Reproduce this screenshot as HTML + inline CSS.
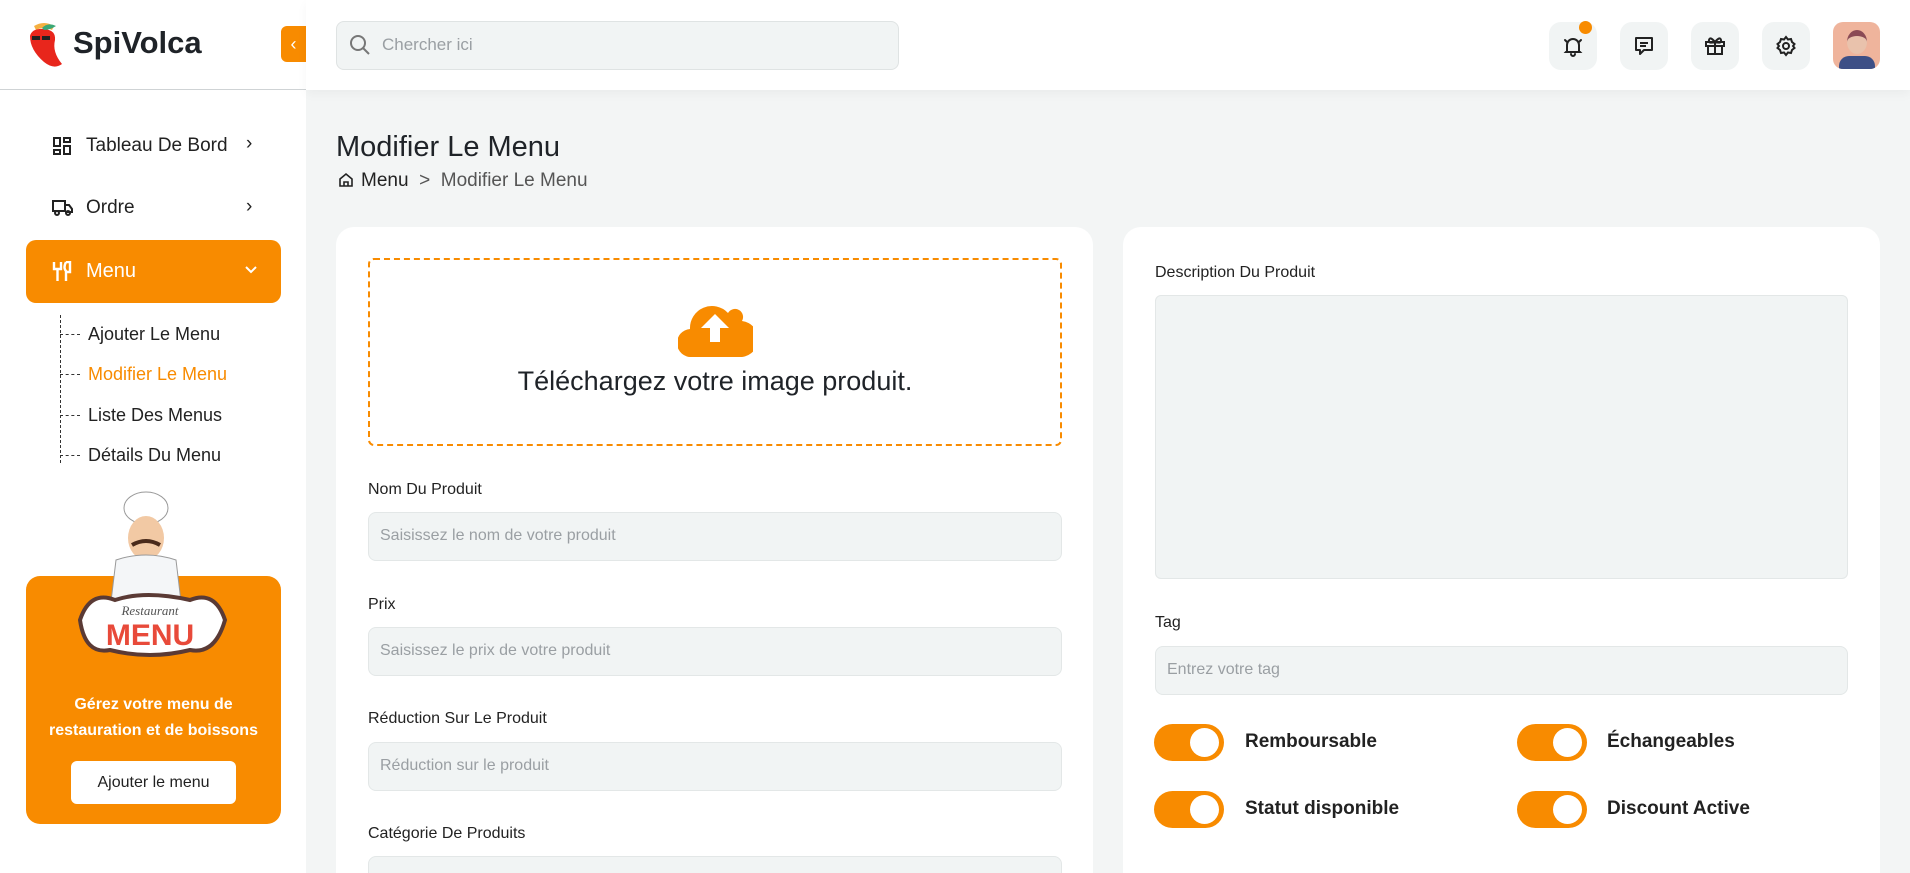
<!DOCTYPE html>
<html style="overflow:hidden"><head><meta charset="utf-8"><style>
*{box-sizing:border-box;margin:0;padding:0}
html,body{width:1910px;height:873px;overflow:hidden}
body{background:#f3f5f5;font-family:"Liberation Sans",sans-serif;color:#1f2328;position:relative}
.abs{position:absolute}
.side{left:0;top:0;width:306px;height:873px;background:#fff}
.hdr{left:306px;top:0;width:1604px;height:90px;background:#fff;box-shadow:0 4px 10px rgba(0,0,0,.04)}
.ib{width:48px;height:48px;border-radius:12px;background:#f1f4f4;display:flex;align-items:center;justify-content:center}
.card{background:#fff;border-radius:18px}
.lbl{font-size:16px;color:#222}
.inp{background:#f1f4f4;border:1px solid #e3e7e7;border-radius:8px;height:49px;font-size:16px;color:#9a9fa3;padding:14px 11px}
.tg{width:70px;height:37px;border-radius:19px;background:#f88b00}
.tg:after{content:"";position:absolute;right:5px;top:4px;width:29px;height:29px;border-radius:50%;background:#fff}
.tl{font-size:19px;font-weight:bold;color:#222}
.nav{font-size:19px;color:#222}
.sub{font-size:18px;color:#222}
</style></head><body>
<div class="abs side"></div>
<div class="abs" style="left:0;top:89px;width:306px;height:1px;background:#cfd3d5"></div>
<svg class="abs" style="left:24px;top:20px" width="40" height="50" viewBox="0 0 40 50"><path d="M10 6 Q20 0 30 6 L28 10 Q20 6 12 10Z" fill="#f5b041"/><path d="M6 16 Q8 8 20 9 Q32 10 31 20 Q28 32 38 44 Q30 50 20 42 Q6 30 6 16Z" fill="#e8261c"/><rect x="8" y="16" width="8" height="4" fill="#222"/><rect x="18" y="16" width="8" height="4" fill="#222"/><path d="M18 8 Q24 2 32 6 Q26 10 20 10Z" fill="#3aa876"/></svg>
<div class="abs" style="left:73px;top:25px;font-size:31px;font-weight:bold;color:#1f2328">SpiVolca</div>
<div class="abs" style="left:281px;top:26px;width:25px;height:36px;background:#f88b00;border-radius:6px 0 0 6px;color:#fff;font-size:18px;text-align:center;line-height:36px">‹</div>
<svg class="abs" style="left:53px;top:137px" width="19" height="19" viewBox="0 0 19 19" fill="none" stroke="#222" stroke-width="2"><rect x="1" y="1" width="6" height="8"/><rect x="11" y="1" width="6" height="4"/><rect x="1" y="13" width="6" height="4"/><rect x="11" y="9" width="6" height="8"/></svg>
<div class="abs nav" style="left:86px;top:135px">Tableau De Bord</div>
<div class="abs nav" style="left:246px;top:133px">›</div>
<svg class="abs" style="left:51px;top:199px" width="22" height="18" viewBox="0 0 22 18" fill="none" stroke="#222" stroke-width="2"><path d="M2 2h12v10H2z M14 6h4l3 4v3h-7"/><circle cx="6" cy="14" r="2"/><circle cx="17" cy="14" r="2"/></svg>
<div class="abs nav" style="left:86px;top:197px">Ordre</div>
<div class="abs nav" style="left:246px;top:196px">›</div>
<div class="abs" style="left:26px;top:240px;width:255px;height:63px;background:#f88b00;border-radius:10px"></div>
<svg class="abs" style="left:52px;top:261px" width="20" height="21" viewBox="0 0 20 21" fill="none" stroke="#fff" stroke-width="2.4"><path d="M2 1v7h7V1M5.5 8v12M14 1q-3 6 0 9v10M14 1h4v10h-4"/></svg>
<div class="abs nav" style="left:86px;top:260px;color:#fff;font-size:20px">Menu</div>
<svg class="abs" style="left:244px;top:265px" width="14" height="10" viewBox="0 0 14 10" fill="none" stroke="#fff" stroke-width="2"><path d="M2 2l5 5 5-5"/></svg>
<div class="abs" style="left:60px;top:315px;height:148px;border-left:1px dashed #333"></div>
<div class="abs" style="left:60px;top:334px;width:20px;border-top:1px dashed #333"></div>
<div class="abs" style="left:60px;top:374px;width:20px;border-top:1px dashed #333"></div>
<div class="abs" style="left:60px;top:415px;width:20px;border-top:1px dashed #333"></div>
<div class="abs" style="left:60px;top:455px;width:20px;border-top:1px dashed #333"></div>
<div class="abs sub" style="left:88px;top:324px">Ajouter Le Menu</div>
<div class="abs sub" style="left:88px;top:364px;color:#f88b00">Modifier Le Menu</div>
<div class="abs sub" style="left:88px;top:405px">Liste Des Menus</div>
<div class="abs sub" style="left:88px;top:445px">Détails Du Menu</div>
<div class="abs" style="left:26px;top:576px;width:255px;height:248px;background:#f88b00;border-radius:14px"></div>
<svg class="abs" style="left:70px;top:480px" width="170" height="200" viewBox="0 0 170 200"><ellipse cx="76" cy="28" rx="22" ry="16" fill="#fff" stroke="#999"/><ellipse cx="76" cy="58" rx="18" ry="22" fill="#f2c9a4"/><path d="M62 65q14-8 28 0" stroke="#4a2a1a" stroke-width="4" fill="none"/><path d="M46 80q30-10 60 0l6 50H40z" fill="#f4f6f8" stroke="#999"/><path d="M10 140q10-30 35-20 30-10 75 0 25-10 35 20-10 35-35 30-40 10-80 0-25 5-30-30z" fill="#fff" stroke="#5a3a35" stroke-width="4"/><text x="80" y="135" font-family="Liberation Serif,serif" font-style="italic" font-size="13" fill="#555" text-anchor="middle">Restaurant</text><text x="80" y="165" font-family="Liberation Sans,sans-serif" font-weight="bold" font-size="30" fill="#e84a3a" text-anchor="middle">MENU</text></svg>
<div class="abs" style="left:26px;top:692px;width:255px;text-align:center;color:#fff;font-size:16px;font-weight:bold;line-height:26px">Gérez votre menu de<br>restauration et de boissons</div>
<div class="abs" style="left:71px;top:761px;width:165px;height:43px;background:#fff;border-radius:6px;text-align:center;line-height:43px;font-size:16px;color:#222">Ajouter le menu</div>
<div class="abs hdr"></div>
<div class="abs" style="left:336px;top:21px;width:563px;height:49px;background:#f1f4f4;border:1px solid #dfe3e3;border-radius:8px"></div>
<svg class="abs" style="left:349px;top:34px" width="22" height="22" viewBox="0 0 22 22" fill="none" stroke="#777" stroke-width="2"><circle cx="9" cy="9" r="7"/><path d="M14 14l6 6"/></svg>
<div class="abs" style="left:382px;top:35px;font-size:17px;color:#9a9fa3">Chercher ici</div>
<div class="abs ib" style="left:1549px;top:22px"><svg width="24" height="24" viewBox="0 0 24 24" fill="none" stroke="#222" stroke-width="2" stroke-linecap="round"><path d="M6 17V11a6 6 0 0112 0v6l1 1H5z M10 20a2 2 0 004 0 M4 6l2 2 M20 6l-2 2"/></svg></div>
<div class="abs" style="left:1579px;top:21px;width:13px;height:13px;border-radius:50%;background:#f88b00"></div>
<div class="abs ib" style="left:1620px;top:22px"><svg width="24" height="24" viewBox="0 0 24 24" fill="none" stroke="#222" stroke-width="2" stroke-linejoin="round"><path d="M4 4h16v12h-8l-4 4v-4H4z M8 9h8 M8 12h6"/></svg></div>
<div class="abs ib" style="left:1691px;top:22px"><svg width="24" height="24" viewBox="0 0 24 24" fill="none" stroke="#222" stroke-width="2"><path d="M3 8h18v4H3z M5 12v8h14v-8 M12 8v12 M12 8q-5-6-6-2t6 2q5-6 6-2t-6 2"/></svg></div>
<div class="abs ib" style="left:1762px;top:22px"><svg width="24" height="24" viewBox="0 0 24 24" fill="none" stroke="#222" stroke-width="2"><circle cx="12" cy="12" r="3"/><path d="M12 3l2 2.5 3-.5 1 3 2.5 2-1.5 2 1.5 2-2.5 2-1 3-3-.5-2 2.5-2-2.5-3 .5-1-3L3.5 14 5 12 3.5 10 6 8l1-3 3 .5z"/></svg></div>
<div class="abs" style="left:1833px;top:22px;width:47px;height:47px;border-radius:10px;background:#efb49c;overflow:hidden"><div class="abs" style="left:14px;top:8px;width:20px;height:24px;border-radius:50%;background:#e9c2ac;border-top:6px solid #8a4a55"></div><div class="abs" style="left:6px;top:34px;width:36px;height:16px;border-radius:10px 10px 0 0;background:#3d4f86"></div></div>
<div class="abs" style="left:336px;top:131px;font-size:29px;color:#1f2328">Modifier Le Menu</div>
<svg class="abs" style="left:338px;top:172px" width="16" height="16" viewBox="0 0 16 16" fill="none" stroke="#222" stroke-width="1.6"><path d="M2 7l6-5 6 5v7H2z M6 14v-4h4v4"/></svg>
<div class="abs" style="left:361px;top:170px;font-size:19px;color:#222">Menu <span style="color:#555">&nbsp;&gt;&nbsp; Modifier Le Menu</span></div>
<div class="abs card" style="left:336px;top:227px;width:757px;height:646px;border-radius:18px 18px 0 0"></div>
<div class="abs" style="left:368px;top:258px;width:694px;height:188px;border:2px dashed #f88b00;border-radius:6px"></div>
<svg class="abs" style="left:678px;top:301px" width="75" height="56" viewBox="0 0 75 56"><path d="M14 56A14 14 0 0112 28 22 22 0 0150 12a8 8 0 0114 8A18 18 0 0160 56z" fill="#f88b00"/><path d="M37 13l-14 14h9v14h10V27h9z" fill="#fff"/></svg>
<div class="abs" style="left:368px;top:366px;width:694px;text-align:center;font-size:27px;color:#1f2328">Téléchargez votre image produit.</div>
<div class="abs lbl" style="left:368px;top:481px">Nom Du Produit</div>
<div class="abs inp" style="left:368px;top:512px;width:694px">Saisissez le nom de votre produit</div>
<div class="abs lbl" style="left:368px;top:596px">Prix</div>
<div class="abs inp" style="left:368px;top:627px;width:694px">Saisissez le prix de votre produit</div>
<div class="abs lbl" style="left:368px;top:710px">Réduction Sur Le Produit</div>
<div class="abs inp" style="left:368px;top:742px;width:694px">Réduction sur le produit</div>
<div class="abs lbl" style="left:368px;top:825px">Catégorie De Produits</div>
<div class="abs inp" style="left:368px;top:856px;width:694px"></div>
<div class="abs card" style="left:1123px;top:227px;width:757px;height:646px;border-radius:18px 18px 0 0"></div>
<div class="abs lbl" style="left:1155px;top:264px">Description Du Produit</div>
<div class="abs" style="left:1155px;top:295px;width:693px;height:284px;background:#f1f4f4;border:1px solid #e3e7e7;border-radius:6px"></div>
<div class="abs lbl" style="left:1155px;top:614px">Tag</div>
<div class="abs inp" style="left:1155px;top:646px;width:693px">Entrez votre tag</div>
<div class="abs tg" style="left:1154px;top:724px"></div>
<div class="abs tl" style="left:1245px;top:731px">Remboursable</div>
<div class="abs tg" style="left:1517px;top:724px"></div>
<div class="abs tl" style="left:1607px;top:731px">Échangeables</div>
<div class="abs tg" style="left:1154px;top:791px"></div>
<div class="abs tl" style="left:1245px;top:798px">Statut disponible</div>
<div class="abs tg" style="left:1517px;top:791px"></div>
<div class="abs tl" style="left:1607px;top:798px">Discount Active</div>
</body></html>
